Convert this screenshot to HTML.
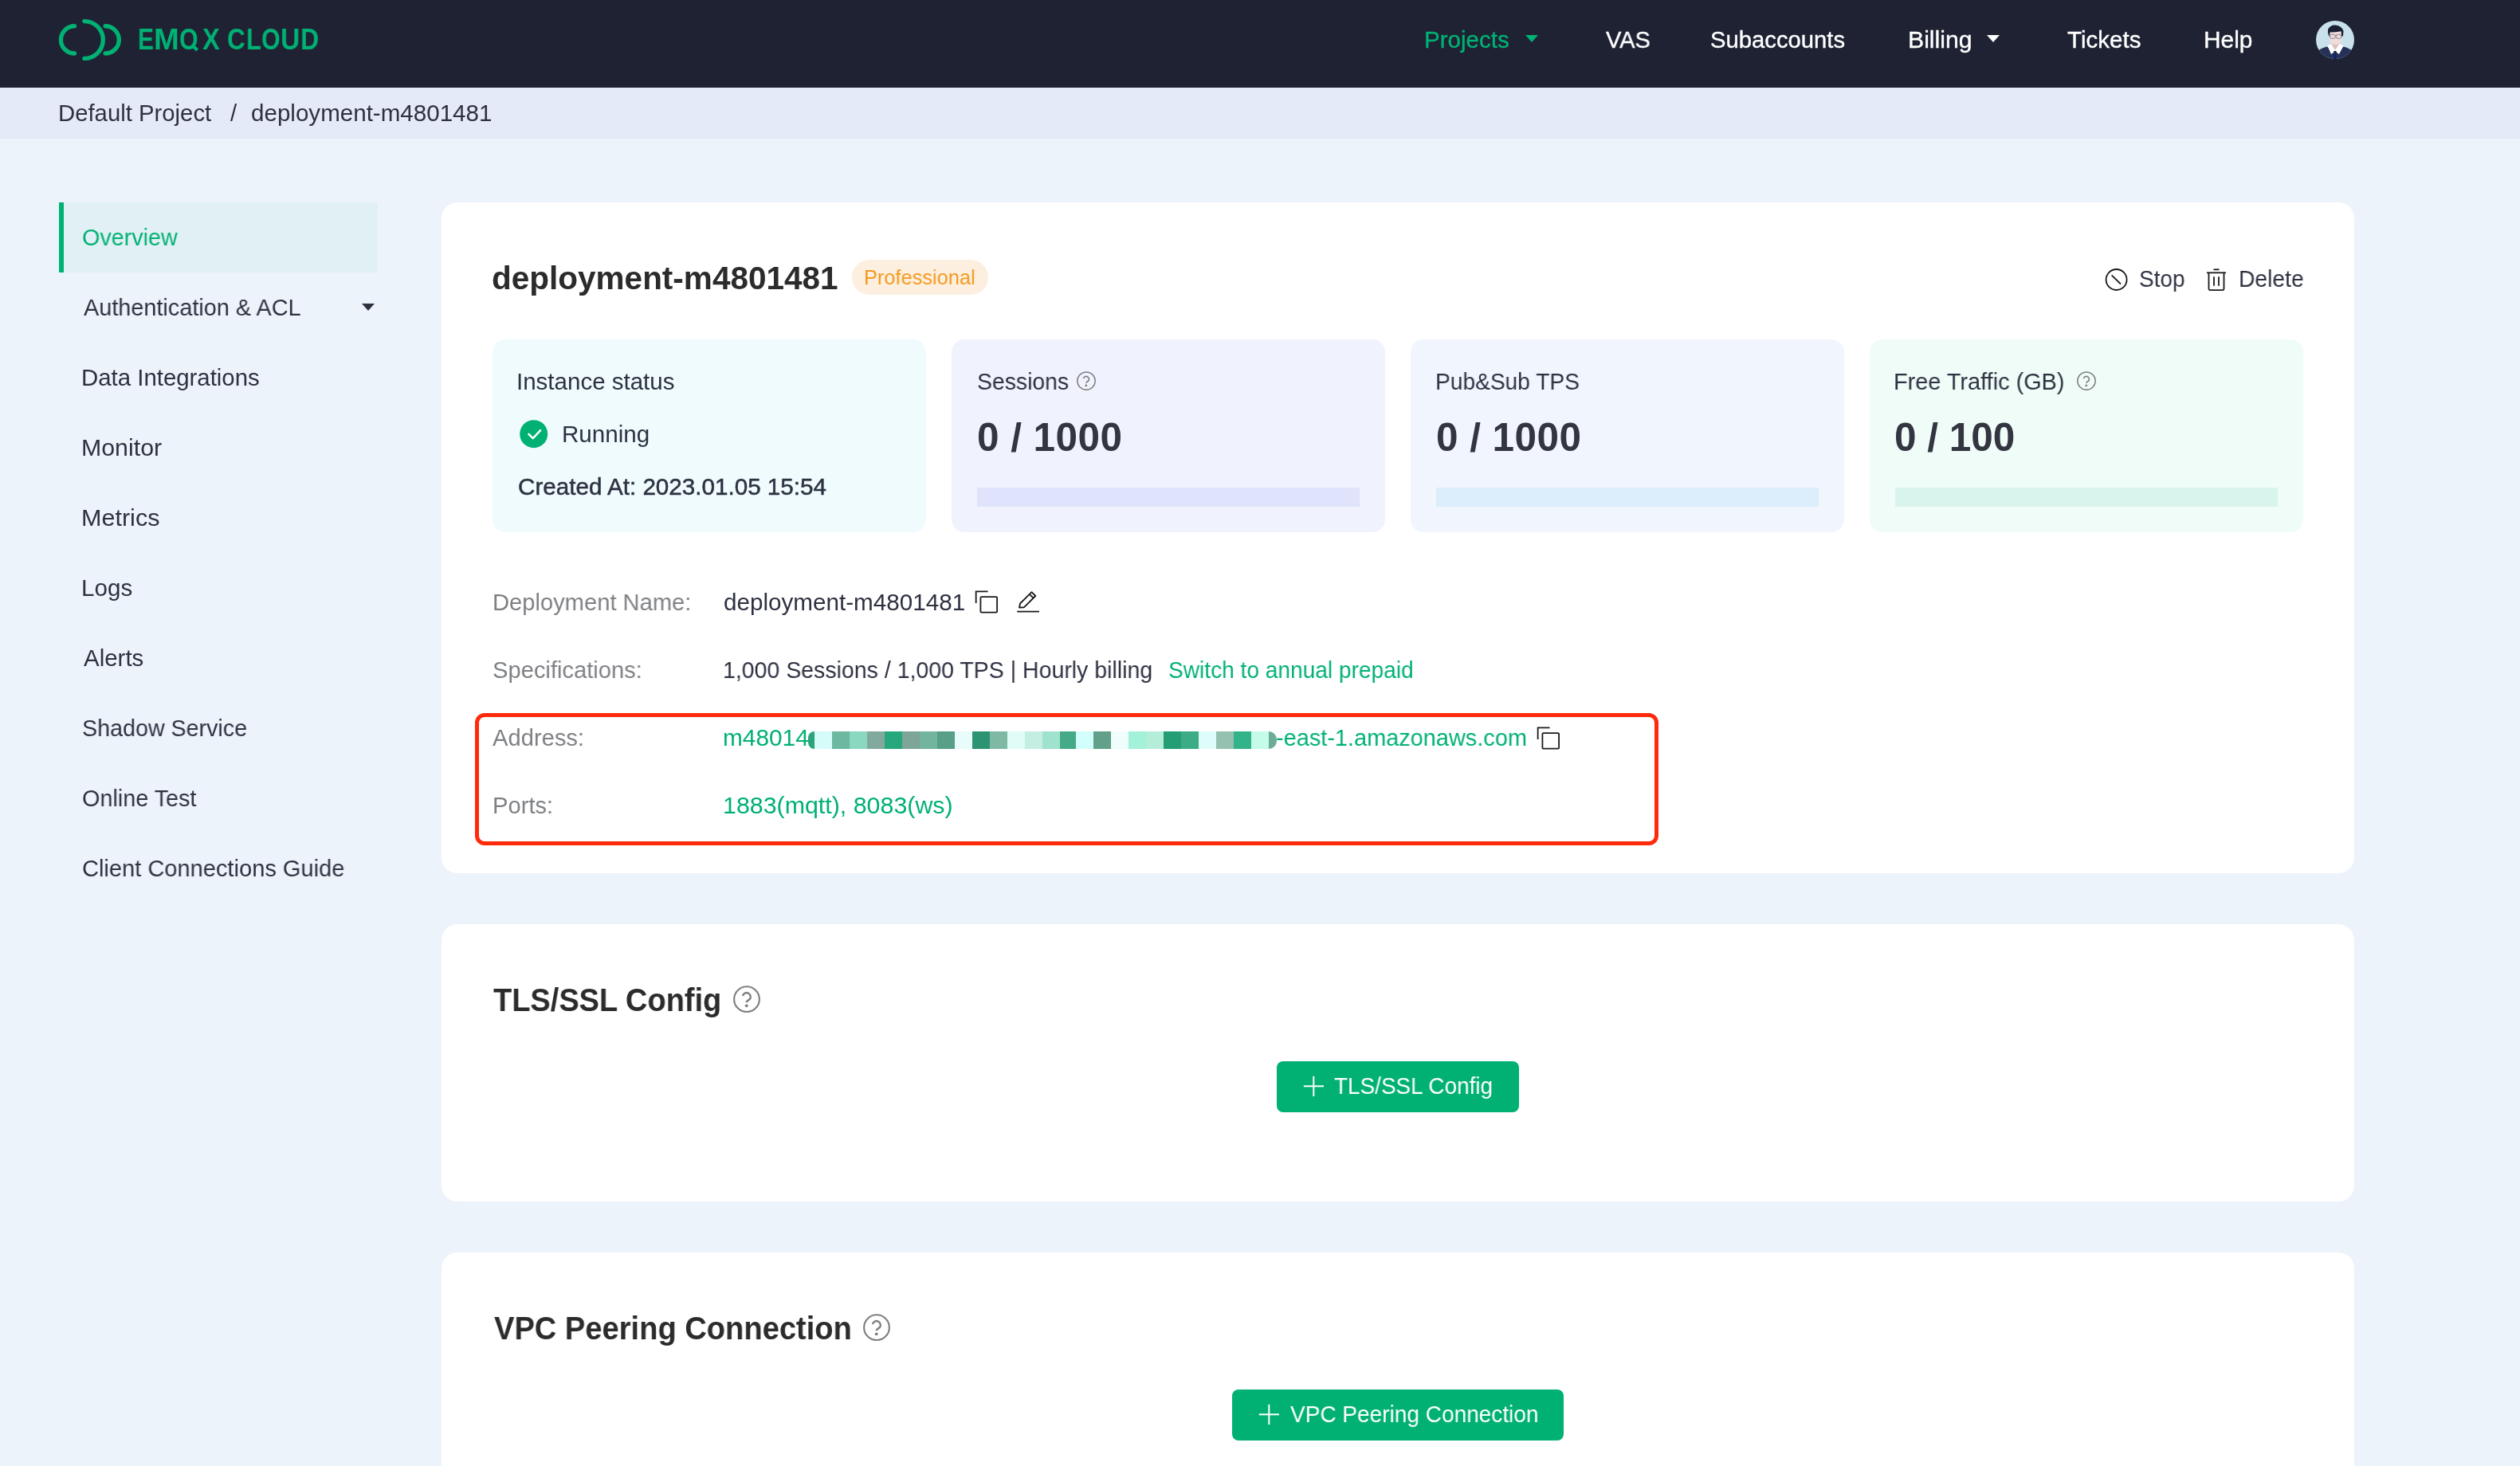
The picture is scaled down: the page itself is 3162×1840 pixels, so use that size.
<!DOCTYPE html>
<html><head><meta charset="utf-8"><title>EMQX Cloud</title><style>
html,body{margin:0;padding:0;}
body{width:3162px;height:1840px;overflow:hidden;position:relative;background:#edf3fb;font-family:"Liberation Sans",sans-serif;}
.abs{position:absolute;}
.t{position:absolute;white-space:nowrap;will-change:transform;}
.hdr{position:absolute;left:0;top:0;width:3162px;height:110px;background:#1e2233;}
.tri{position:absolute;width:0;height:0;border-left:8px solid transparent;border-right:8px solid transparent;border-top:9.6px solid #fff;}
.card{position:absolute;left:554px;width:2400px;background:#fff;border-radius:20px;}
.btn{position:absolute;height:64px;background:#00b173;border-radius:8px;}
</style></head><body>
<div class="hdr"></div>
<svg class="abs" style="left:0;top:0" width="170" height="110" viewBox="0 0 170 110">
<g fill="none" stroke="#00b173" stroke-width="5.4" stroke-linecap="round">
<path d="M93.5 32.8 A17.1 17.1 0 0 0 93.5 67"/>
<path d="M105.9 26.6 A23.4 23.4 0 0 1 105.9 73.4"/>
<path d="M132.2 32.8 A17.1 17.1 0 0 1 132.2 67"/>
</g></svg>
<div class="t" style="left:173.00px;top:26.61px;font-size:37.50px;line-height:45px;color:#00b173;font-weight:700;transform-origin:0 0;transform:scaleX(0.8000)">E</div>

<div class="t" style="left:192.71px;top:26.61px;font-size:37.50px;line-height:45px;color:#00b173;font-weight:700;transform-origin:0 0;transform:scaleX(1.0179)">M</div>

<div class="t" style="left:224.79px;top:26.61px;font-size:37.50px;line-height:45px;color:#00b173;font-weight:700;transform-origin:0 0;transform:scaleX(0.8037)">O</div>

<div class="t" style="left:253.60px;top:26.61px;font-size:37.50px;line-height:45px;color:#00b173;font-weight:700;transform-origin:0 0;transform:scaleX(0.8645)">X</div>

<div class="t" style="left:285.15px;top:26.61px;font-size:37.50px;line-height:45px;color:#00b173;font-weight:700;transform-origin:0 0;transform:scaleX(0.8363)">C</div>

<div class="t" style="left:308.84px;top:26.61px;font-size:37.50px;line-height:45px;color:#00b173;font-weight:700;transform-origin:0 0;transform:scaleX(0.8251)">L</div>

<div class="t" style="left:327.79px;top:26.61px;font-size:37.50px;line-height:45px;color:#00b173;font-weight:700;transform-origin:0 0;transform:scaleX(0.8077)">O</div>

<div class="t" style="left:351.98px;top:26.61px;font-size:37.50px;line-height:45px;color:#00b173;font-weight:700;transform-origin:0 0;transform:scaleX(0.8963)">U</div>

<div class="t" style="left:377.18px;top:26.61px;font-size:37.50px;line-height:45px;color:#00b173;font-weight:700;transform-origin:0 0;transform:scaleX(0.8549)">D</div>

<svg class="abs" style="left:236px;top:50px" width="16" height="16" viewBox="0 0 16 16"><path d="M5.5 7.2 L11.6 13" stroke="#00b173" stroke-width="4.4" stroke-linecap="butt"/></svg>
<div class="t" style="left:1787.14px;top:33.18px;font-size:29.20px;line-height:35px;color:#00b173;transform-origin:0 0;transform:scaleX(1.0120);-webkit-text-stroke:0.3px #00b173">Projects</div>

<div class="tri" style="left:1914px;top:43.6px;border-top-color:#00b173"></div>
<div class="t" style="left:2014.50px;top:33.18px;font-size:29.20px;line-height:35px;color:#fff;transform-origin:0 0;transform:scaleX(0.9932);-webkit-text-stroke:0.35px #fff">VAS</div>

<div class="t" style="left:2146.33px;top:33.17px;font-size:29.24px;line-height:35px;color:#fff;-webkit-text-stroke:0.35px #fff">Subaccounts</div>

<div class="t" style="left:2393.58px;top:33.18px;font-size:29.20px;line-height:35px;color:#fff;transform-origin:0 0;transform:scaleX(1.0349);-webkit-text-stroke:0.35px #fff">Billing</div>

<div class="tri" style="left:2493px;top:43.6px;border-top-color:#fff"></div>
<div class="t" style="left:2593.91px;top:33.18px;font-size:29.20px;line-height:35px;color:#fff;transform-origin:0 0;transform:scaleX(1.0120);-webkit-text-stroke:0.35px #fff">Tickets</div>

<div class="t" style="left:2764.61px;top:33.18px;font-size:29.20px;line-height:35px;color:#fff;transform-origin:0 0;transform:scaleX(1.0236);-webkit-text-stroke:0.35px #fff">Help</div>

<div class="abs" style="left:2906px;top:26px;width:48px;height:48px;border-radius:50%;overflow:hidden"><svg width="48" height="48" viewBox="0 0 48 48" style="display:block">
<g>
<rect width="48" height="48" fill="#c9e1ea"/>
<path d="M18.5 26 L30.5 26 L30.5 33 L24 38 L18.5 33 Z" fill="#dcc1bf"/>
<path d="M17 12 L32 12 L32 24 Q31 30 24.5 30 Q18 30 17.5 24 Z" fill="#f1dcd9"/>
<path d="M15 11 Q18 5 24.5 5.5 Q32 6 34.5 13 L34 19 L32.2 20 L31.6 13.2 Q25 14.5 17.6 14.6 L16.9 19.8 L16 19 Q14.5 14 15 11 Z" fill="#1b1f33"/>
<path d="M0 48 L0 40 Q5 34.5 14 32.5 L24 41 L34.5 32.5 Q43 34.5 48 40 L48 48 Z" fill="#26315a"/>
<path d="M14.5 31.5 L19 29 L24 37 L29.5 29 L34.5 31.5 L29 42 L24 38.5 L19 42 Z" fill="#ffffff"/>
<path d="M22.6 40.5 L25.4 40.5 L25.8 48 L22.2 48 Z" fill="#10246a"/>
<path d="M22.5 38 L25.5 38 L25.8 40.5 L22.2 40.5 Z" fill="#0b1a33"/>
<g fill="none" stroke="#5a5f80" stroke-width="0.7"><ellipse cx="21" cy="19.8" rx="3.5" ry="2.7"/><ellipse cx="28.6" cy="19.8" rx="3.5" ry="2.7"/><path d="M24.4 18.6 L25.2 18.6"/></g>
</g></svg></div>
<div class="abs" style="left:0;top:110px;width:3162px;height:64px;background:#e4eaf7"></div>
<div class="t" style="left:72.65px;top:124.98px;font-size:29.20px;line-height:35px;color:#2e3141;transform-origin:0 0;transform:scaleX(1.0041);">Default Project</div>

<div class="t" style="left:289.00px;top:124.98px;font-size:29.20px;line-height:35px;color:#2e3141;transform-origin:0 0;transform:scaleX(1.0034);">/</div>

<div class="t" style="left:314.82px;top:124.98px;font-size:29.20px;line-height:35px;color:#2e3141;transform-origin:0 0;transform:scaleX(1.0130);">deployment-m4801481</div>

<div class="abs" style="left:74px;top:254px;width:400px;height:88px;background:#e1f0f5"></div>
<div class="abs" style="left:74px;top:254px;width:6px;height:88px;background:#00b173"></div>
<div class="t" style="left:103.45px;top:281.18px;font-size:29.20px;line-height:35px;color:#00b173;transform-origin:0 0;transform:scaleX(0.9846);">Overview</div>

<div class="t" style="left:104.60px;top:369.18px;font-size:29.20px;line-height:35px;color:#2e3141;transform-origin:0 0;transform:scaleX(0.9884);">Authentication &amp; ACL</div>

<div class="t" style="left:102.25px;top:457.18px;font-size:29.20px;line-height:35px;color:#2e3141;transform-origin:0 0;transform:scaleX(1.0065);">Data Integrations</div>

<div class="t" style="left:102.17px;top:545.18px;font-size:29.20px;line-height:35px;color:#2e3141;transform-origin:0 0;transform:scaleX(1.0387);">Monitor</div>

<div class="t" style="left:102.16px;top:633.18px;font-size:29.20px;line-height:35px;color:#2e3141;transform-origin:0 0;transform:scaleX(1.0466);">Metrics</div>

<div class="t" style="left:102.23px;top:721.18px;font-size:29.20px;line-height:35px;color:#2e3141;transform-origin:0 0;transform:scaleX(1.0147);">Logs</div>

<div class="t" style="left:104.60px;top:809.18px;font-size:29.20px;line-height:35px;color:#2e3141;transform-origin:0 0;transform:scaleX(1.0099);">Alerts</div>

<div class="t" style="left:103.45px;top:897.18px;font-size:29.20px;line-height:35px;color:#2e3141;transform-origin:0 0;transform:scaleX(0.9818);">Shadow Service</div>

<div class="t" style="left:103.45px;top:985.18px;font-size:29.20px;line-height:35px;color:#2e3141;transform-origin:0 0;transform:scaleX(0.9863);">Online Test</div>

<div class="t" style="left:103.15px;top:1073.18px;font-size:29.20px;line-height:35px;color:#2e3141;transform-origin:0 0;transform:scaleX(0.9952);">Client Connections Guide</div>

<div class="tri" style="left:454px;top:380.5px;border-top-color:#2e3141"></div>
<div class="card" style="top:254px;height:842px"></div>
<div class="t" style="left:617.38px;top:324.86px;font-size:40.52px;line-height:49px;color:#2b2b2b;font-weight:700;">deployment-m4801481</div>

<div class="abs" style="left:1069px;top:326px;width:171px;height:44px;border-radius:22px;background:#fcefdf"></div>
<div class="t" style="left:1084.47px;top:333.23px;font-size:25.60px;line-height:31px;color:#f5981c;transform-origin:0 0;transform:scaleX(0.9910);">Professional</div>

<svg class="abs" style="left:2640px;top:336px" width="32" height="32" viewBox="0 0 32 32"><g fill="none" stroke="#1a1a1a" stroke-width="1.8"><circle cx="15.6" cy="15" r="13"/><path d="M9.6 9.3 L21 20.5"/></g></svg>
<div class="t" style="left:2683.58px;top:332.58px;font-size:29.20px;line-height:35px;color:#2e3141;transform-origin:0 0;transform:scaleX(0.9596);">Stop</div>

<svg class="abs" style="left:2766px;top:334px" width="30" height="34" viewBox="0 0 30 34"><g fill="none" stroke="#1a1a1a" stroke-width="1.8"><path d="M3 8.3 L27 8.3"/><path d="M11.5 4.3 L18.5 4.3"/><path d="M5.5 8.5 L5.5 28.6 Q5.5 30.1 7 30.1 L23 30.1 Q24.5 30.1 24.5 28.6 L24.5 8.5"/><path d="M12 13.3 L12 24.8"/><path d="M18 13.3 L18 24.8"/></g></svg>
<div class="t" style="left:2808.54px;top:332.58px;font-size:29.20px;line-height:35px;color:#2e3141;transform-origin:0 0;transform:scaleX(0.9678);">Delete</div>

<div class="abs" style="left:618px;top:426px;width:544px;height:242px;border-radius:16px;background:#effbfd"></div>
<div class="abs" style="left:1194px;top:426px;width:544px;height:242px;border-radius:16px;background:#f0f2fd"></div>
<div class="abs" style="left:1226px;top:612px;width:480px;height:24px;background:#dfe3fb"></div>
<div class="abs" style="left:1770px;top:426px;width:544px;height:242px;border-radius:16px;background:#f1f5fd"></div>
<div class="abs" style="left:1802px;top:612px;width:480px;height:24px;background:#dcedfb"></div>
<div class="abs" style="left:2346px;top:426px;width:544px;height:242px;border-radius:16px;background:#effcf8"></div>
<div class="abs" style="left:2378px;top:612px;width:480px;height:24px;background:#d9f4ed"></div>
<div class="t" style="left:648.34px;top:461.88px;font-size:29.20px;line-height:35px;color:#2e3141;transform-origin:0 0;transform:scaleX(1.0110);">Instance status</div>

<svg class="abs" style="left:652.4px;top:527.2px" width="36" height="36" viewBox="0 0 36 36"><circle cx="17.7" cy="17.7" r="17.5" fill="#00b173"/><path d="M11.4 17.9 L16.8 23.2 L26.1 13.1" fill="none" stroke="#fff" stroke-width="2.5" stroke-linecap="round" stroke-linejoin="round"/></svg>
<div class="t" style="left:705.22px;top:528.18px;font-size:29.20px;line-height:35px;color:#2e3141;transform-origin:0 0;transform:scaleX(1.0137);">Running</div>

<div class="t" style="left:649.52px;top:593.63px;font-size:29.20px;line-height:35px;color:#2e3141;transform-origin:0 0;transform:scaleX(1.0147);-webkit-text-stroke:0.5px #2e3141">Created At: 2023.01.05 15:54</div>

<div class="t" style="left:1225.61px;top:461.88px;font-size:29.20px;line-height:35px;color:#2e3141;transform-origin:0 0;transform:scaleX(0.9726);">Sessions</div>

<div class="t" style="left:1226.02px;top:519.05px;font-size:49.50px;line-height:59px;color:#333541;font-weight:700;letter-spacing:0.45px">0 / 1000</div>

<div class="t" style="left:1800.75px;top:461.88px;font-size:29.20px;line-height:35px;color:#2e3141;transform-origin:0 0;transform:scaleX(0.9640);">Pub&amp;Sub TPS</div>

<div class="t" style="left:1801.52px;top:519.05px;font-size:49.50px;line-height:59px;color:#333541;font-weight:700;letter-spacing:0.45px">0 / 1000</div>

<div class="t" style="left:2376.44px;top:461.88px;font-size:29.20px;line-height:35px;color:#2e3141;transform-origin:0 0;transform:scaleX(0.9894);">Free Traffic (GB)</div>

<div class="t" style="left:2377.27px;top:519.05px;font-size:49.50px;line-height:59px;color:#333541;font-weight:700;letter-spacing:0.0px">0 / 100</div>

<svg class="abs" style="left:1350.6px;top:466.3px" width="24" height="24" viewBox="0 0 24 24"><g fill="none" stroke="#808080"><circle cx="12" cy="12.1" r="11.2" stroke-width="1.5"/><path d="M8.45 9.2 A3.5 3.5 0 1 1 14.6 12.1 Q12 13.6 11.8 14.9" stroke-width="1.7"/></g><circle cx="11.8" cy="17.9" r="1.4" fill="#808080"/></svg>
<svg class="abs" style="left:2606.2px;top:466.3px" width="24" height="24" viewBox="0 0 24 24"><g fill="none" stroke="#808080"><circle cx="12" cy="12.1" r="11.2" stroke-width="1.5"/><path d="M8.45 9.2 A3.5 3.5 0 1 1 14.6 12.1 Q12 13.6 11.8 14.9" stroke-width="1.7"/></g><circle cx="11.8" cy="17.9" r="1.4" fill="#808080"/></svg>
<div class="t" style="left:617.67px;top:739.38px;font-size:29.20px;line-height:35px;color:#7e8084;transform-origin:0 0;transform:scaleX(0.9979);">Deployment Name:</div>

<div class="t" style="left:617.67px;top:823.63px;font-size:29.20px;line-height:35px;color:#7e8084;transform-origin:0 0;transform:scaleX(0.9979);">Specifications:</div>

<div class="t" style="left:617.67px;top:908.63px;font-size:29.20px;line-height:35px;color:#7e8084;transform-origin:0 0;transform:scaleX(0.9979);">Address:</div>

<div class="t" style="left:617.67px;top:993.63px;font-size:29.20px;line-height:35px;color:#7e8084;transform-origin:0 0;transform:scaleX(0.9979);">Ports:</div>

<div class="t" style="left:907.81px;top:738.58px;font-size:29.20px;line-height:35px;color:#2e3141;transform-origin:0 0;transform:scaleX(1.0154);">deployment-m4801481</div>

<svg class="abs" style="left:1223px;top:740px" width="30" height="30" viewBox="0 0 30 30"><g fill="none" stroke="#1a1a1a" stroke-width="1.8"><path d="M1.65 17 L1.65 2.4 L16.5 2.4"/><rect x="7.4" y="9.15" width="20.7" height="19.45" rx="1.2"/></g></svg>
<svg class="abs" style="left:1275px;top:741px" width="31" height="29" viewBox="0 0 31 29"><g fill="none" stroke="#1a1a1a" stroke-width="1.8" stroke-linejoin="round"><path d="M4 21.5 L5 16.5 L19.5 2.2 L24.3 7 L9.8 21.3 Z"/><path d="M16.8 4.9 L21.6 9.7"/><path d="M1.2 26.6 L29 26.6"/></g></svg>
<div class="t" style="left:906.75px;top:823.63px;font-size:29.20px;line-height:35px;color:#2e3141;transform-origin:0 0;transform:scaleX(0.9764);">1,000 Sessions / 1,000 TPS | Hourly billing</div>

<div class="t" style="left:1465.88px;top:823.63px;font-size:29.20px;line-height:35px;color:#00b173;transform-origin:0 0;transform:scaleX(0.9623);">Switch to annual prepaid</div>

<div class="t" style="left:906.96px;top:908.63px;font-size:29.20px;line-height:35px;color:#00b173;transform-origin:0 0;transform:scaleX(1.0219);">m48014</div>

<div class="abs" style="left:1022px;top:918px;width:22px;height:22px;background:#d6fcfa"></div>
<div class="abs" style="left:1044px;top:918px;width:22px;height:22px;background:#6cb8a0"></div>
<div class="abs" style="left:1066px;top:918px;width:22px;height:22px;background:#89d8bf"></div>
<div class="abs" style="left:1088px;top:918px;width:22px;height:22px;background:#82a99d"></div>
<div class="abs" style="left:1110px;top:918px;width:22px;height:22px;background:#27a77d"></div>
<div class="abs" style="left:1132px;top:918px;width:22px;height:22px;background:#7da699"></div>
<div class="abs" style="left:1154px;top:918px;width:22px;height:22px;background:#72b49e"></div>
<div class="abs" style="left:1176px;top:918px;width:22px;height:22px;background:#579f87"></div>
<div class="abs" style="left:1198px;top:918px;width:22px;height:22px;background:#e8fcfc"></div>
<div class="abs" style="left:1220px;top:918px;width:22px;height:22px;background:#2c9473"></div>
<div class="abs" style="left:1242px;top:918px;width:22px;height:22px;background:#7fb9a4"></div>
<div class="abs" style="left:1264px;top:918px;width:22px;height:22px;background:#dffcf6"></div>
<div class="abs" style="left:1286px;top:918px;width:22px;height:22px;background:#c4eee2"></div>
<div class="abs" style="left:1308px;top:918px;width:22px;height:22px;background:#9fe3cf"></div>
<div class="abs" style="left:1330px;top:918px;width:20px;height:22px;background:#44aa88"></div>
<div class="abs" style="left:1350px;top:918px;width:22px;height:22px;background:#d2fefb"></div>
<div class="abs" style="left:1372px;top:918px;width:22px;height:22px;background:#62a08a"></div>
<div class="abs" style="left:1394px;top:918px;width:22px;height:22px;background:#effdfc"></div>
<div class="abs" style="left:1416px;top:918px;width:22px;height:22px;background:#a3f1d9"></div>
<div class="abs" style="left:1438px;top:918px;width:22px;height:22px;background:#b4eed9"></div>
<div class="abs" style="left:1460px;top:918px;width:22px;height:22px;background:#259d75"></div>
<div class="abs" style="left:1482px;top:918px;width:22px;height:22px;background:#3cac87"></div>
<div class="abs" style="left:1504px;top:918px;width:22px;height:22px;background:#defcfa"></div>
<div class="abs" style="left:1526px;top:918px;width:22px;height:22px;background:#95c2b0"></div>
<div class="abs" style="left:1548px;top:918px;width:22px;height:22px;background:#33b38a"></div>
<div class="abs" style="left:1570px;top:918px;width:22px;height:22px;background:#c4fbe9"></div>
<div class="abs" style="left:1014px;top:918px;width:8px;height:22px;background:#2aa57b;border-radius:8px 0 0 8px"></div>
<div class="abs" style="left:1592px;top:918px;width:10px;height:22px;background:#6fac98;border-radius:0 10px 10px 0"></div>
<div class="t" style="left:1601.34px;top:908.63px;font-size:29.20px;line-height:35px;color:#00b173;transform-origin:0 0;transform:scaleX(0.9904);">-east-1.amazonaws.com</div>

<svg class="abs" style="left:1928px;top:911px" width="30" height="30" viewBox="0 0 30 30"><g fill="none" stroke="#1a1a1a" stroke-width="1.8"><path d="M1.65 17 L1.65 2.4 L16.5 2.4"/><rect x="7.4" y="9.15" width="20.7" height="19.45" rx="1.2"/></g></svg>
<div class="t" style="left:906.62px;top:993.63px;font-size:29.20px;line-height:35px;color:#00b173;transform-origin:0 0;transform:scaleX(1.0404);">1883(mqtt), 8083(ws)</div>

<div class="abs" style="left:596px;top:894.5px;width:1485px;height:166.5px;box-sizing:border-box;border:5.5px solid #ff2a0c;border-radius:12px"></div>
<div class="card" style="top:1160px;height:348px"></div>
<div class="t" style="left:619.12px;top:1230.94px;font-size:40.00px;line-height:48px;color:#2b2b2b;font-weight:700;transform-origin:0 0;transform:scaleX(0.9495)">TLS/SSL Config</div>

<svg class="abs" style="left:919.5px;top:1237px" width="34" height="34" viewBox="0 0 24 24"><g fill="none" stroke="#808080"><circle cx="12" cy="12.1" r="11.2" stroke-width="1.5"/><path d="M8.45 9.2 A3.5 3.5 0 1 1 14.6 12.1 Q12 13.6 11.8 14.9" stroke-width="1.7"/></g><circle cx="11.8" cy="17.9" r="1.4" fill="#808080"/></svg>
<div class="btn" style="left:1602px;top:1332px;width:304px"></div>
<svg class="abs" style="left:1635px;top:1350px" width="27" height="27" viewBox="0 0 27 27"><g stroke="#fff" stroke-width="2"><path d="M0.8 13.3 L26 13.3"/><path d="M13.3 0.8 L13.3 26"/></g></svg>
<div class="t" style="left:1673.94px;top:1345.58px;font-size:29.20px;line-height:35px;color:#fff;transform-origin:0 0;transform:scaleX(0.9558);">TLS/SSL Config</div>

<div class="card" style="top:1572px;height:400px"></div>
<div class="t" style="left:619.50px;top:1642.94px;font-size:40.00px;line-height:48px;color:#2b2b2b;font-weight:700;transform-origin:0 0;transform:scaleX(0.9525)">VPC Peering Connection</div>

<svg class="abs" style="left:1082.5px;top:1649px" width="34" height="34" viewBox="0 0 24 24"><g fill="none" stroke="#808080"><circle cx="12" cy="12.1" r="11.2" stroke-width="1.5"/><path d="M8.45 9.2 A3.5 3.5 0 1 1 14.6 12.1 Q12 13.6 11.8 14.9" stroke-width="1.7"/></g><circle cx="11.8" cy="17.9" r="1.4" fill="#808080"/></svg>
<div class="btn" style="left:1546px;top:1744px;width:416px"></div>
<svg class="abs" style="left:1579px;top:1762px" width="27" height="27" viewBox="0 0 27 27"><g stroke="#fff" stroke-width="2"><path d="M0.8 13.3 L26 13.3"/><path d="M13.3 0.8 L13.3 26"/></g></svg>
<div class="t" style="left:1618.50px;top:1757.78px;font-size:29.20px;line-height:35px;color:#fff;transform-origin:0 0;transform:scaleX(0.9599);">VPC Peering Connection</div>

</body></html>
